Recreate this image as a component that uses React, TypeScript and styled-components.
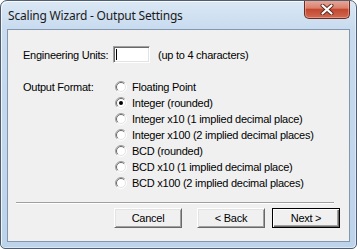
import React from 'react';
import styled, { createGlobalStyle } from 'styled-components';

const GlobalStyle = createGlobalStyle`
  html, body {
    margin: 0;
    padding: 0;
    background: #ffffff;
  }
  body {
    width: 357px;
    height: 249px;
    overflow: hidden;
  }
`;

const Window = styled.div`
  box-sizing: border-box;
  width: 357px;
  height: 249px;
  display: flex;
  flex-direction: column;
  border: 1px solid #4f5d6e;
  border-radius: 7px 7px 5px 5px;
  background: linear-gradient(to bottom, #dbe8f5 0px, #c8dbef 28px, #bdd3ea 100%);
  box-shadow: inset 1px 1px 0 rgba(255, 255, 255, 0.75), inset -1px -1px 0 rgba(255, 255, 255, 0.45);
  overflow: hidden;
`;

const TitleBar = styled.div`
  height: 28px;
  flex: none;
  display: flex;
  align-items: flex-start;
  justify-content: space-between;
  padding-left: 7px;
`;

const Title = styled.div`
  font-family: 'Noto Sans', 'Open Sans', sans-serif;
  font-size: 12px;
  letter-spacing: -0.2px;
  color: #1a1a1a;
  margin-top: 6px;
`;

const CloseButton = styled.div`
  box-sizing: border-box;
  width: 46px;
  height: 19px;
  margin-right: 6px;
  margin-top: -1px;
  border: 1px solid #6b2b20;
  border-top: none;
  border-radius: 0 0 5px 5px;
  background: linear-gradient(to bottom, #e9ab9c 0%, #d9806d 45%, #c4472f 52%, #cf6a52 100%);
  box-shadow: inset 0 0 0 1px rgba(255, 200, 190, 0.45);
  display: flex;
  align-items: center;
  justify-content: center;
`;

const Client = styled.div`
  flex: 1;
  margin: 0 6px 6px 6px;
  border: 1px solid #8296ae;
  background: #f0f0f0;
  display: flex;
  flex-direction: column;
  font-family: 'Liberation Sans', Arial, sans-serif;
  font-size: 11px;
  letter-spacing: -0.25px;
  color: #000;
`;

const Form = styled.div`
  display: flex;
  flex-direction: column;
  gap: 16px;
  padding: 16px 0 0 15px;
`;

const FieldRow = styled.div<{ $top?: boolean }>`
  display: flex;
  align-items: ${p => (p.$top ? 'flex-start' : 'center')};
`;

const Label = styled.div`
  width: 90px;
  flex: none;
  line-height: 16px;
`;

const UnitsBox = styled.div`
  box-sizing: border-box;
  width: 37px;
  height: 17px;
  background: #fff;
  border-style: solid;
  border-width: 1px;
  border-color: #a0a0a0 #ffffff #ffffff #a0a0a0;
  box-shadow: inset 1px 1px 0 #696969, inset -1px -1px 0 #e3e3e3;
  padding: 2px 0 0 2px;
`;

const Caret = styled.div`
  width: 1px;
  height: 11px;
  background: #000;
`;

const Hint = styled.div`
  margin-left: 8px;
`;

const RadioList = styled.div`
  display: flex;
  flex-direction: column;
  margin-left: 2px;
`;

const RadioRow = styled.div`
  height: 16px;
  display: flex;
  align-items: center;
  gap: 5px;
`;

const Separator = styled.div`
  margin: 11px 15px 0 8px;
  height: 1px;
  background: #a0a0a0;
  border-bottom: 1px solid #ffffff;
`;

const ButtonRow = styled.div`
  display: flex;
  justify-content: flex-end;
  padding: 4px 9px 0 0;
  gap: 7px;
`;

const Button = styled.div<{ $default?: boolean; $gapAfter?: number }>`
  box-sizing: border-box;
  width: 68px;
  height: 20px;
  margin-right: ${p => p.$gapAfter ?? 0}px;
  display: flex;
  align-items: center;
  justify-content: center;
  background: #f0f0f0;
  border: 1px solid;
  border-color: ${p => (p.$default ? '#000' : '#ffffff #696969 #696969 #ffffff')};
  box-shadow: ${p =>
    p.$default
      ? 'inset 1px 1px 0 #ffffff, inset -1px -1px 0 #696969, inset -2px -2px 0 #a0a0a0'
      : 'inset 1px 1px 0 #e3e3e3, inset -1px -1px 0 #a0a0a0'};
`;

function Radio({ checked }: { checked?: boolean }) {
  return (
    <svg width="12" height="12" viewBox="0 0 12 12">
      <circle cx="6" cy="6" r="5" fill="#fff" />
      <path d="M2.1 9.9 A5.5 5.5 0 0 1 9.9 2.1" fill="none" stroke="#a0a0a0" strokeWidth="1" />
      <path d="M9.9 2.1 A5.5 5.5 0 0 1 2.1 9.9" fill="none" stroke="#ffffff" strokeWidth="1" />
      <path d="M2.8 9.2 A4.5 4.5 0 0 1 9.2 2.8" fill="none" stroke="#696969" strokeWidth="1" />
      <path d="M9.2 2.8 A4.5 4.5 0 0 1 2.8 9.2" fill="none" stroke="#e3e3e3" strokeWidth="1" />
      {checked && <circle cx="6" cy="6" r="2" fill="#000" />}
    </svg>
  );
}

function CloseGlyph() {
  return (
    <svg width="14" height="11" viewBox="0 0 14 11">
      <path d="M2.5 1.5 L11.5 9.5 M11.5 1.5 L2.5 9.5" stroke="#5a2a22" strokeWidth="4" strokeLinecap="round" />
      <path d="M2.5 1.5 L11.5 9.5 M11.5 1.5 L2.5 9.5" stroke="#ffffff" strokeWidth="2.2" strokeLinecap="round" />
    </svg>
  );
}

const formats = [
  'Floating Point',
  'Integer (rounded)',
  'Integer x10 (1 implied decimal place)',
  'Integer x100 (2 implied decimal places)',
  'BCD (rounded)',
  'BCD x10 (1 implied decimal place)',
  'BCD x100 (2 implied decimal places)',
];

export default function App() {
  const selected = 1;
  return (
    <>
      <GlobalStyle />
      <Window>
        <TitleBar>
          <Title>Scaling Wizard - Output Settings</Title>
          <CloseButton>
            <CloseGlyph />
          </CloseButton>
        </TitleBar>
        <Client>
          <Form>
            <FieldRow>
              <Label>Engineering Units:</Label>
              <UnitsBox>
                <Caret />
              </UnitsBox>
              <Hint>(up to 4 characters)</Hint>
            </FieldRow>
            <FieldRow $top>
              <Label>Output Format:</Label>
              <RadioList>
                {formats.map((f, i) => (
                  <RadioRow key={f}>
                    <Radio checked={i === selected} />
                    <span>{f}</span>
                  </RadioRow>
                ))}
              </RadioList>
            </FieldRow>
          </Form>
          <Separator />
          <ButtonRow>
            <Button $gapAfter={8}>Cancel</Button>
            <Button>&lt; Back</Button>
            <Button $default>Next &gt;</Button>
          </ButtonRow>
        </Client>
      </Window>
    </>
  );
}
